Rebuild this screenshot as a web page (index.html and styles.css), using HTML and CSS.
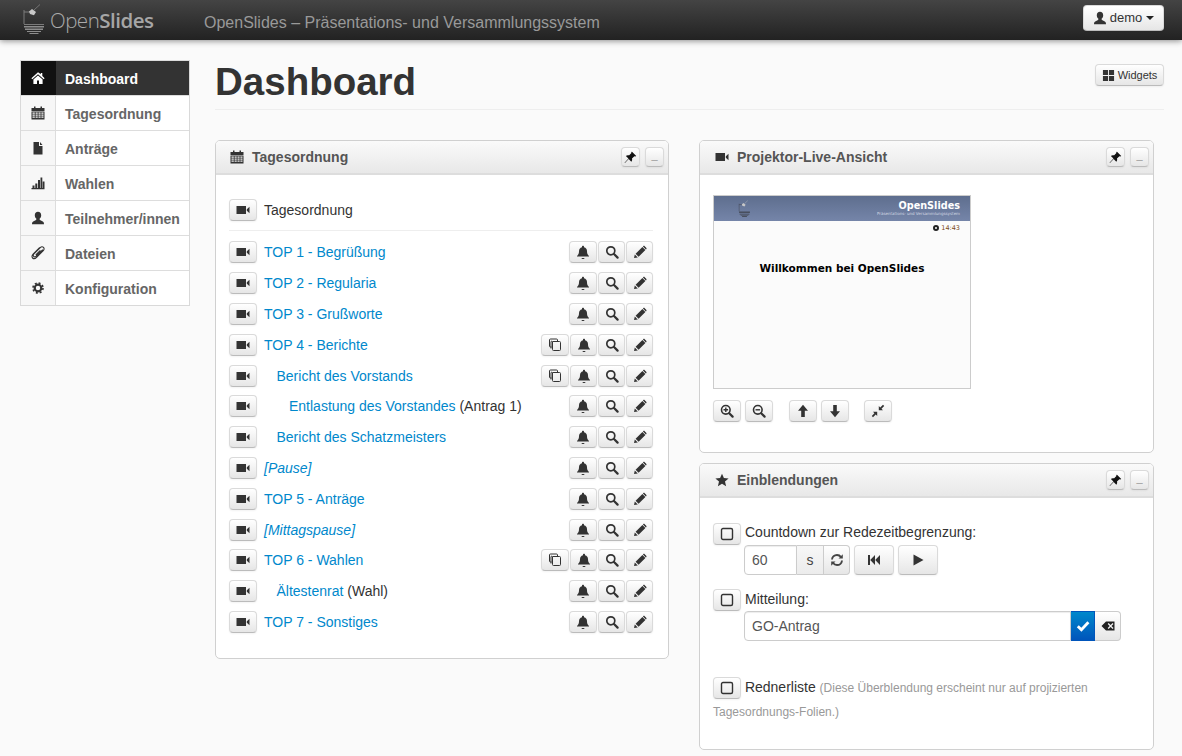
FILE: index.html
```html
<!DOCTYPE html>
<html lang="de">
<head>
  <meta charset="UTF-8" />
  <title>OpenSlides - Dashboard</title>
  <link rel="stylesheet" href="styles.css">
</head>
<body>
  <svg class="sprite" xmlns="http://www.w3.org/2000/svg">
    <symbol id="i-home" viewBox="0 0 14 14"><path d="M7 1.2 .4 7.200l.9 1L7 3.200l5.700 5 .9-1-2.300-2.100V2H9.800v1.300zM2.400 8.600V13H6V9.500h2V13h3.600V8.600L7 4.600z"/></symbol>
    <symbol id="i-calendar" viewBox="0 0 14 14"><path d="M3 .5h1.500V2h5V.5H11V2h2.500v3H.5V2H3z"/><path fill-rule="evenodd" d="M.5 5.500h13V13.500H.5zM1.500 6.500v1.200h2.300V6.500zm3.100 0v1.200h2.100V6.500zm2.900 0v1.200h2.100V6.500zm2.900 0v1.200h2.100V6.500zM1.500 8.500v1.200h2.300V8.500zm3.100 0v1.200h2.100V8.500zm2.900 0v1.200h2.100V8.500zm2.900 0v1.200h2.100V8.500zM1.500 10.500v1.200h2.300v-1.200zm3.100 0v1.200h2.100v-1.200zm2.900 0v1.200h2.100v-1.200zm2.900 0v1.200h2.100v-1.200z"/></symbol>
    <symbol id="i-file" viewBox="0 0 14 14"><path d="M2.500 1H8v4h3.500v8.500h-9zM9 1l2.500 3H9z"/></symbol>
    <symbol id="i-stats" viewBox="0 0 14 14"><path d="M.5 12h13v1.200H.5zM1.500 9.500h2V12h-2zM4.300 7.500h2V12h-2zM7 4h2v8H7zM9.500 1.500h1.800V12H9.500zM11.700 5.500h1.800V12h-1.800z"/></symbol>
    <symbol id="i-user" viewBox="0 0 14 14"><path d="M7 .8c2 0 3.200 1.500 3.200 3.400 0 1.300-.6 2.700-1.400 3.400-.3.300-.3 1.100.2 1.400l2.800 1.400c.9.500 1.200 1.200 1.200 2.800H1c0-1.600.3-2.300 1.200-2.800L5 9c.5-.3.500-1.100.2-1.400C4.400 6.900 3.800 5.500 3.800 4.200 3.800 2.300 5 .8 7 .8z"/></symbol>
    <symbol id="i-clip" viewBox="0 0 14 14"><path fill="none" stroke="currentColor" stroke-width="1.100" d="M11.800 3.600 5 10.400c-.7.700-1.900.7-2.300 0-.7-.7-.6-1.500 0-2.200l6.600-6.600c1-1 2.400-1 3.200-.2.800.8.800 2.200-.2 3.200L5.600 11.300c-1.400 1.400-3 1.700-4 .7-1-1-.7-2.600.7-4L8.800 1.500M9.400 4.400 4.800 9"/></symbol>
    <symbol id="i-cog" viewBox="0 0 14 14"><circle cx="7" cy="7" r="3.300" fill="none" stroke="currentColor" stroke-width="2.200"/><circle cx="7" cy="7" r="5" fill="none" stroke="currentColor" stroke-width="1.600" stroke-dasharray="2 1.930"/></symbol>
    <symbol id="i-video" viewBox="0 0 14 14"><path d="M.5 3h9.500v8H.5zM10.800 6.200 13.500 3.800v6.400L10.800 7.800z"/></symbol>
    <symbol id="i-bell" viewBox="0 0 14 14"><path d="M7 .8c.6 0 1 .4 1 1v.5c2 .5 3 2 3 4 0 2.500.6 3.500 2 4.700v.5H1V11c1.400-1.200 2-2.200 2-4.700 0-2 1-3.500 3-4V1.800c0-.6.400-1 1-1zM5.500 13h3c0 .6-.7 1-1.500 1s-1.500-.4-1.500-1z"/></symbol>
    <symbol id="i-search" viewBox="0 0 14 14"><circle cx="5.800" cy="5.800" r="4" fill="none" stroke="currentColor" stroke-width="1.700"/><path fill="none" stroke="currentColor" stroke-width="2.200" stroke-linecap="round" d="m9 9 3.600 3.600"/></symbol>
    <symbol id="i-pencil" viewBox="0 0 14 14"><path d="M1 13l.8-3.400 3 3zM2.600 8.800 9.400 2l3 3-6.800 6.800zM10.200 1.200c.5-.5 1-.5 1.500 0l1.500 1.500c.5.500.5 1 0 1.500l-.3.300-3-3z"/></symbol>
    <symbol id="i-copy" viewBox="0 0 14 14"><path fill="none" stroke="currentColor" stroke-width="1" d="M9.500 3V2a1 1 0 0 0-1-1h-6a1 1 0 0 0-1 1v6a1 1 0 0 0 1 1h1M4.500 3.500h7a1 1 0 0 1 1 1v7a1 1 0 0 1-1 1h-6a1 1 0 0 1-1-1z"/><path fill="none" stroke="currentColor" stroke-width="1" d="M3 10.500V4a1 1 0 0 1 1-1"/></symbol>
    <symbol id="i-pin" viewBox="0 0 14 14"><path d="M8.600.8 13.200 5.400l-1 .6-1-.3-2.600 2.400c.4 1.400.1 2.600-.7 3.400L5 8.600 1 13l-.4-.4L4.800 8 2 5.400c.9-.9 2.200-1.100 3.600-.7l2.400-2.600-.2-.9z"/></symbol>
    <symbol id="i-star" viewBox="0 0 14 14"><path d="m7 .8 1.900 4.300 4.700.4-3.600 3.100 1.100 4.600L7 10.800l-4.100 2.400L4 8.600.4 5.500l4.700-.4z"/></symbol>
    <symbol id="i-check" viewBox="0 0 14 14"><path fill="none" stroke="currentColor" stroke-width="2.800" d="m1.800 7.200 3.600 3.600 7-7.600"/></symbol>
    <symbol id="i-refresh" viewBox="0 0 14 14"><path fill="none" stroke="currentColor" stroke-width="1.900" d="M2 6.500C2.200 3.900 4.300 2 7 2c1.700 0 3 .7 3.900 2M12 7.500c-.2 2.600-2.300 4.500-5 4.500-1.700 0-3-.7-3.900-2"/><path d="M12.800 1.200v4.300H8.500zM1.200 12.800V8.500h4.300z"/></symbol>
    <symbol id="i-back" viewBox="0 0 14 14"><path d="M1 2h2v10H1zM8 2 3.200 7 8 12zM13 2 8.200 7l4.800 5z"/></symbol>
    <symbol id="i-play" viewBox="0 0 14 14"><path d="M2.500 1.500 12.500 7l-10 5.500z"/></symbol>
    <symbol id="i-del" viewBox="0 0 14 14"><path fill-rule="evenodd" d="M5 2.500h8.500v9H5L.5 7zM6.700 5l2 2-2 2 .9.900 2-2 2 2 .9-.9-2-2 2-2-.9-.9-2 2-2-2z"/></symbol>
    <symbol id="i-zoomin" viewBox="0 0 14 14"><circle cx="5.800" cy="5.800" r="4.300" fill="none" stroke="currentColor" stroke-width="1.600"/><path fill="none" stroke="currentColor" stroke-width="2.200" stroke-linecap="round" d="m9.200 9.200 3.400 3.400"/><path fill="none" stroke="currentColor" stroke-width="1.400" d="M3.500 5.800h4.600M5.800 3.500v4.600"/></symbol>
    <symbol id="i-zoomout" viewBox="0 0 14 14"><circle cx="5.800" cy="5.800" r="4.300" fill="none" stroke="currentColor" stroke-width="1.600"/><path fill="none" stroke="currentColor" stroke-width="2.200" stroke-linecap="round" d="m9.200 9.200 3.400 3.400"/><path fill="none" stroke="currentColor" stroke-width="1.400" d="M3.500 5.800h4.600"/></symbol>
    <symbol id="i-up" viewBox="0 0 14 14"><path d="M7 .8 12 6.800H8.800V13H5.200V6.800H2z"/></symbol>
    <symbol id="i-down" viewBox="0 0 14 14"><path d="M7 13.200 2 7.200h3.200V1h3.600v6.200H12z"/></symbol>
    <symbol id="i-small" viewBox="0 0 14 14"><path d="M7.800 6.200 7.800 2l1.400 1.400L12 .8l1.200 1.200-2.700 2.700 1.500 1.500zM6.200 7.800H2l1.400 1.400L.8 12l1.200 1.200 2.700-2.700 1.500 1.500z"/></symbol>
    <symbol id="i-grid" viewBox="0 0 14 14"><path d="M1 1h5.500v5.500H1zM7.500 1H13v5.500H7.500zM1 7.500h5.500V13H1zM7.500 7.500H13V13H7.500z"/></symbol>
    <symbol id="i-box" viewBox="0 0 14 14"><rect x="1.500" y="1.500" width="11" height="11" rx="1.500" fill="none" stroke="currentColor" stroke-width="1.400"/></symbol>
    <symbol id="i-logo" viewBox="0 0 24 30"><path d="M1.500 6h1v14h-1zM2 7.500h6v1H2zM2 20h20v1H2z" opacity=".8"/><path d="M2 22h20v1.500H2zM3 24.500h18V26H3zM5 27h14v1H5zM7.500 29h9v1h-9z"/><path d="M7 7.500 10 5l4 3-2 3.200-4-1.200z" class="logo-lamp"/><path fill="none" stroke="currentColor" stroke-width=".7" d="M12 6 18 .5"/></symbol>
  </svg>

  <header class="navbar">
    <a class="brand" href="#">
      <svg class="brand-logo"><use href="#i-logo"/></svg>
      <span>Open<b>Slides</b></span>
    </a>
    <span class="tagline">OpenSlides – Präsentations- und Versammlungssystem</span>
    <button class="btn user-btn"><svg class="ico"><use href="#i-user"/></svg> demo <i class="caret"></i></button>
  </header>

  <div class="page">
    <nav class="sidebar">
      <a class="nav-item active" href="#"><span class="nav-ico"><svg class="ico"><use href="#i-home"/></svg></span><span class="nav-label">Dashboard</span></a>
      <a class="nav-item" href="#"><span class="nav-ico"><svg class="ico"><use href="#i-calendar"/></svg></span><span class="nav-label">Tagesordnung</span></a>
      <a class="nav-item" href="#"><span class="nav-ico"><svg class="ico"><use href="#i-file"/></svg></span><span class="nav-label">Anträge</span></a>
      <a class="nav-item" href="#"><span class="nav-ico"><svg class="ico"><use href="#i-stats"/></svg></span><span class="nav-label">Wahlen</span></a>
      <a class="nav-item" href="#"><span class="nav-ico"><svg class="ico"><use href="#i-user"/></svg></span><span class="nav-label">Teilnehmer/innen</span></a>
      <a class="nav-item" href="#"><span class="nav-ico"><svg class="ico"><use href="#i-clip"/></svg></span><span class="nav-label">Dateien</span></a>
      <a class="nav-item" href="#"><span class="nav-ico"><svg class="ico"><use href="#i-cog"/></svg></span><span class="nav-label">Konfiguration</span></a>
    </nav>

    <main class="content">
      <div class="page-head">
        <h1>Dashboard</h1>
        <button class="btn widgets-btn"><svg class="ico"><use href="#i-grid"/></svg> Widgets</button>
      </div>

      <div class="columns">
        <section class="panel">
          <div class="panel-head">
            <svg class="ico"><use href="#i-calendar"/></svg>
            <h3>Tagesordnung</h3>
            <button class="btn btn-mini"><svg class="ico"><use href="#i-pin"/></svg></button>
            <button class="btn btn-mini muted">_</button>
          </div>
          <div class="panel-body agenda">
            <div class="agenda-title">
              <button class="btn btn-row"><svg class="ico"><use href="#i-video"/></svg></button>
              <span>Tagesordnung</span>
            </div>
            <div class="agenda-row">
              <button class="btn btn-row"><svg class="ico"><use href="#i-video"/></svg></button>
              <span class="agenda-text"><a href="#">TOP 1 - Begrüßung</a></span>
              <button class="btn btn-row"><svg class="ico"><use href="#i-bell"/></svg></button><button class="btn btn-row"><svg class="ico"><use href="#i-search"/></svg></button><button class="btn btn-row"><svg class="ico"><use href="#i-pencil"/></svg></button>
            </div>
            <div class="agenda-row">
              <button class="btn btn-row"><svg class="ico"><use href="#i-video"/></svg></button>
              <span class="agenda-text"><a href="#">TOP 2 - Regularia</a></span>
              <button class="btn btn-row"><svg class="ico"><use href="#i-bell"/></svg></button><button class="btn btn-row"><svg class="ico"><use href="#i-search"/></svg></button><button class="btn btn-row"><svg class="ico"><use href="#i-pencil"/></svg></button>
            </div>
            <div class="agenda-row">
              <button class="btn btn-row"><svg class="ico"><use href="#i-video"/></svg></button>
              <span class="agenda-text"><a href="#">TOP 3 - Grußworte</a></span>
              <button class="btn btn-row"><svg class="ico"><use href="#i-bell"/></svg></button><button class="btn btn-row"><svg class="ico"><use href="#i-search"/></svg></button><button class="btn btn-row"><svg class="ico"><use href="#i-pencil"/></svg></button>
            </div>
            <div class="agenda-row">
              <button class="btn btn-row"><svg class="ico"><use href="#i-video"/></svg></button>
              <span class="agenda-text"><a href="#">TOP 4 - Berichte</a></span>
              <button class="btn btn-row"><svg class="ico"><use href="#i-copy"/></svg></button><button class="btn btn-row"><svg class="ico"><use href="#i-bell"/></svg></button><button class="btn btn-row"><svg class="ico"><use href="#i-search"/></svg></button><button class="btn btn-row"><svg class="ico"><use href="#i-pencil"/></svg></button>
            </div>
            <div class="agenda-row">
              <button class="btn btn-row"><svg class="ico"><use href="#i-video"/></svg></button>
              <span class="agenda-text level-1"><a href="#">Bericht des Vorstands</a></span>
              <button class="btn btn-row"><svg class="ico"><use href="#i-copy"/></svg></button><button class="btn btn-row"><svg class="ico"><use href="#i-bell"/></svg></button><button class="btn btn-row"><svg class="ico"><use href="#i-search"/></svg></button><button class="btn btn-row"><svg class="ico"><use href="#i-pencil"/></svg></button>
            </div>
            <div class="agenda-row">
              <button class="btn btn-row"><svg class="ico"><use href="#i-video"/></svg></button>
              <span class="agenda-text level-2"><a href="#">Entlastung des Vorstandes</a> (Antrag 1)</span>
              <button class="btn btn-row"><svg class="ico"><use href="#i-bell"/></svg></button><button class="btn btn-row"><svg class="ico"><use href="#i-search"/></svg></button><button class="btn btn-row"><svg class="ico"><use href="#i-pencil"/></svg></button>
            </div>
            <div class="agenda-row">
              <button class="btn btn-row"><svg class="ico"><use href="#i-video"/></svg></button>
              <span class="agenda-text level-1"><a href="#">Bericht des Schatzmeisters</a></span>
              <button class="btn btn-row"><svg class="ico"><use href="#i-bell"/></svg></button><button class="btn btn-row"><svg class="ico"><use href="#i-search"/></svg></button><button class="btn btn-row"><svg class="ico"><use href="#i-pencil"/></svg></button>
            </div>
            <div class="agenda-row">
              <button class="btn btn-row"><svg class="ico"><use href="#i-video"/></svg></button>
              <span class="agenda-text"><a class="pause" href="#">[Pause]</a></span>
              <button class="btn btn-row"><svg class="ico"><use href="#i-bell"/></svg></button><button class="btn btn-row"><svg class="ico"><use href="#i-search"/></svg></button><button class="btn btn-row"><svg class="ico"><use href="#i-pencil"/></svg></button>
            </div>
            <div class="agenda-row">
              <button class="btn btn-row"><svg class="ico"><use href="#i-video"/></svg></button>
              <span class="agenda-text"><a href="#">TOP 5 - Anträge</a></span>
              <button class="btn btn-row"><svg class="ico"><use href="#i-bell"/></svg></button><button class="btn btn-row"><svg class="ico"><use href="#i-search"/></svg></button><button class="btn btn-row"><svg class="ico"><use href="#i-pencil"/></svg></button>
            </div>
            <div class="agenda-row">
              <button class="btn btn-row"><svg class="ico"><use href="#i-video"/></svg></button>
              <span class="agenda-text"><a class="pause" href="#">[Mittagspause]</a></span>
              <button class="btn btn-row"><svg class="ico"><use href="#i-bell"/></svg></button><button class="btn btn-row"><svg class="ico"><use href="#i-search"/></svg></button><button class="btn btn-row"><svg class="ico"><use href="#i-pencil"/></svg></button>
            </div>
            <div class="agenda-row">
              <button class="btn btn-row"><svg class="ico"><use href="#i-video"/></svg></button>
              <span class="agenda-text"><a href="#">TOP 6 - Wahlen</a></span>
              <button class="btn btn-row"><svg class="ico"><use href="#i-copy"/></svg></button><button class="btn btn-row"><svg class="ico"><use href="#i-bell"/></svg></button><button class="btn btn-row"><svg class="ico"><use href="#i-search"/></svg></button><button class="btn btn-row"><svg class="ico"><use href="#i-pencil"/></svg></button>
            </div>
            <div class="agenda-row">
              <button class="btn btn-row"><svg class="ico"><use href="#i-video"/></svg></button>
              <span class="agenda-text level-1"><a href="#">Ältestenrat</a> (Wahl)</span>
              <button class="btn btn-row"><svg class="ico"><use href="#i-bell"/></svg></button><button class="btn btn-row"><svg class="ico"><use href="#i-search"/></svg></button><button class="btn btn-row"><svg class="ico"><use href="#i-pencil"/></svg></button>
            </div>
            <div class="agenda-row">
              <button class="btn btn-row"><svg class="ico"><use href="#i-video"/></svg></button>
              <span class="agenda-text"><a href="#">TOP 7 - Sonstiges</a></span>
              <button class="btn btn-row"><svg class="ico"><use href="#i-bell"/></svg></button><button class="btn btn-row"><svg class="ico"><use href="#i-search"/></svg></button><button class="btn btn-row"><svg class="ico"><use href="#i-pencil"/></svg></button>
            </div>
          </div>
        </section>

        <div class="right-col">
          <section class="panel">
            <div class="panel-head">
              <svg class="ico"><use href="#i-video"/></svg>
              <h3>Projektor-Live-Ansicht</h3>
              <button class="btn btn-mini"><svg class="ico"><use href="#i-pin"/></svg></button>
              <button class="btn btn-mini muted">_</button>
            </div>
            <div class="panel-body projector">
              <div class="slide">
                <div class="slide-band">
                  <svg class="slide-logo"><use href="#i-logo"/></svg>
                  <div class="slide-brand"><strong>OpenSlides</strong><small>Präsentations- und Versammlungssystem</small></div>
                </div>
                <div class="slide-clock"><span class="clock-dot"></span> 14:43</div>
                <div class="slide-title">Willkommen bei OpenSlides</div>
              </div>
              <div class="projector-tools">
                <button class="btn btn-row"><svg class="ico"><use href="#i-zoomin"/></svg></button>
                <button class="btn btn-row"><svg class="ico"><use href="#i-zoomout"/></svg></button>
                <button class="btn btn-row tool-sep"><svg class="ico"><use href="#i-up"/></svg></button>
                <button class="btn btn-row"><svg class="ico"><use href="#i-down"/></svg></button>
                <button class="btn btn-row tool-sep2"><svg class="ico"><use href="#i-small"/></svg></button>
              </div>
            </div>
          </section>

          <section class="panel">
            <div class="panel-head">
              <svg class="ico"><use href="#i-star"/></svg>
              <h3>Einblendungen</h3>
              <button class="btn btn-mini"><svg class="ico"><use href="#i-pin"/></svg></button>
              <button class="btn btn-mini muted">_</button>
            </div>
            <div class="panel-body overlays">
              <div class="overlay">
                <button class="btn btn-row"><svg class="ico"><use href="#i-box"/></svg></button>
                <div class="overlay-main">
                  <label>Countdown zur Redezeitbegrenzung:</label>
                  <div class="controls">
                    <div class="input-group">
                      <input class="field field-short" type="text" value="60">
                      <span class="addon">s</span>
                      <span class="addon addon-end"><svg class="ico"><use href="#i-refresh"/></svg></span>
                    </div>
                    <button class="btn btn-tall"><svg class="ico"><use href="#i-back"/></svg></button>
                    <button class="btn btn-tall"><svg class="ico"><use href="#i-play"/></svg></button>
                  </div>
                </div>
              </div>
              <div class="overlay">
                <button class="btn btn-row"><svg class="ico"><use href="#i-box"/></svg></button>
                <div class="overlay-main">
                  <label>Mitteilung:</label>
                  <div class="controls">
                    <div class="input-group wide">
                      <input class="field field-long" type="text" value="GO-Antrag">
                      <span class="addon addon-ok"><svg class="ico"><use href="#i-check"/></svg></span>
                      <span class="addon addon-end addon-del"><svg class="ico"><use href="#i-del"/></svg></span>
                    </div>
                  </div>
                </div>
              </div>
              <p class="speakers">
                <button class="btn btn-row"><svg class="ico"><use href="#i-box"/></svg></button>
                Rednerliste <small>(Diese Überblendung erscheint nur auf projizierten</small> <small>Tagesordnungs-Folien.)</small>
              </p>
            </div>
          </section>
        </div>
      </div>
    </main>
  </div>
</body>
</html>
```

FILE: styles.css
```css
* {
  box-sizing: border-box;
}
body {
  margin: 0;
  background: #fafafa;
  color: #333;
  font-family: "Liberation Sans", Arial, sans-serif;
  font-size: 14px;
  line-height: 20px;
  overflow: hidden;
}
a {
  color: #0088cc;
  text-decoration: none;
}
.sprite {
  display: none;
}
.ico {
  width: 14px;
  height: 14px;
  fill: currentColor;
  flex: none;
  display: block;
}

/* buttons */
.btn {
  display: inline-flex;
  align-items: center;
  justify-content: center;
  padding: 0;
  font: inherit;
  color: #333;
  background: linear-gradient(#ffffff, #e6e6e6);
  border: 1px solid #dadada;
  border-bottom-color: #bbbbbb;
  border-radius: 4px;
  box-shadow: inset 0 1px 0 rgba(255,255,255,0.2), 0 1px 2px rgba(0,0,0,0.05);
}
.btn-row {
  width: 28px;
  height: 22px;
  flex: none;
}
.btn-mini {
  width: 19px;
  height: 20px;
  flex: none;
  margin-left: 5px;
}
.btn-mini .ico {
  width: 13px;
  height: 13px;
  color: #111;
}
.btn-mini.muted {
  color: #999;
  font-size: 11px;
  line-height: 14px;
  align-items: flex-start;
}
.btn-tall {
  width: 40px;
  height: 30px;
}

/* navbar */
.navbar {
  height: 40px;
  display: flex;
  align-items: center;
  padding: 0 18px 0 22px;
  background: linear-gradient(#444444, #222222);
  box-shadow: 0 1px 6px rgba(0,0,0,0.45);
}
.brand {
  display: flex;
  align-items: center;
  gap: 4px;
  width: 182px;
  color: #aaa;
  font-family: "Open Sans", sans-serif;
  font-size: 20.5px;
  font-weight: 300;
  letter-spacing: -0.5px;
}
.brand b {
  font-weight: 600;
  color: #a6a6a6;
}
.brand-logo {
  width: 24px;
  height: 30px;
  fill: #8d8d8d;
  color: #8d8d8d;
  margin-bottom: 2px;
}
.logo-lamp {
  fill: #c8c8c8;
}
.tagline {
  color: #999;
  font-size: 16px;
  padding-top: 5px;
  flex: 1;
}
.user-btn {
  width: 81px;
  height: 26px;
  margin-bottom: 4px;
  gap: 3px;
  font-size: 13px;
}
.caret {
  width: 0;
  height: 0;
  margin-left: 1px;
  border-left: 4px solid transparent;
  border-right: 4px solid transparent;
  border-top: 4px solid #222;
}

/* layout */
.page {
  display: flex;
  gap: 25px;
  padding: 20px 18px 0 20px;
}
.sidebar {
  width: 170px;
  flex: none;
  align-self: flex-start;
  background: #fff;
  border: 1px solid #d9d9d9;
  border-top: 0;
}
.nav-item {
  display: flex;
  height: 35px;
  border-top: 1px solid #dddddd;
  color: #666;
  font-weight: bold;
}
.nav-ico {
  width: 35px;
  display: flex;
  align-items: center;
  justify-content: center;
  background: #f7f7f7;
  border-right: 1px solid #dddddd;
  color: #333;
  flex: none;
}
.nav-label {
  padding: 1px 0 0 9px;
  line-height: 35px;
}
.nav-item.active {
  background: #333;
  color: #fff;
}
.nav-item.active .nav-ico {
  background: #111;
  border-right-color: #111;
  color: #fff;
}
.content {
  flex: 1;
}
.page-head {
  display: flex;
  justify-content: space-between;
  height: 50px;
  border-bottom: 1px solid #eeeeee;
}
h1 {
  margin: 0;
  color: #333;
  font-size: 38.5px;
  line-height: 44px;
}
.widgets-btn {
  width: 69px;
  height: 22px;
  margin-top: 4px;
  gap: 3px;
  font-size: 11px;
}
.widgets-btn .ico {
  width: 13px;
  height: 13px;
}
.columns {
  display: grid;
  grid-template-columns: 454px 455px;
  gap: 30px;
  margin-top: 30px;
  align-items: start;
}
.right-col {
  display: flex;
  flex-direction: column;
  gap: 10px;
}

/* panels */
.panel {
  background: #fff;
  border: 1px solid #d0d0d0;
  border-radius: 5px;
}
.panel-head {
  height: 34px;
  display: flex;
  align-items: center;
  padding: 0 4px 0 14px;
  background: linear-gradient(#fafafa, #e8e8e8);
  border-bottom: 2px solid #dddddd;
  border-radius: 4px 4px 0 0;
  color: #333;
}
.right-col .panel-head {
  padding-left: 15px;
}
.panel-head h3 {
  flex: 1;
  margin: 0 0 0 8px;
  color: #555;
  font-size: 14px;
  line-height: 20px;
}
.panel-body {
  padding: 20px 15px 21px 13px;
}

/* agenda */
.agenda-title {
  display: flex;
  align-items: center;
  gap: 7px;
  height: 36px;
  padding-bottom: 6px;
  border-bottom: 1px solid #eeeeee;
  margin-bottom: 6px;
}
.agenda-row {
  display: flex;
  align-items: center;
  height: 30.8px;
}
.agenda-row .btn + .btn {
  width: 27px;
  margin-left: 1px;
}
.agenda-text {
  flex: 1;
  padding-left: 7px;
}
.level-1 {
  padding-left: 19.5px;
}
.level-2 {
  padding-left: 32px;
}
.pause {
  font-style: italic;
}

/* projector */
.projector {
  padding-bottom: 30px;
}
.slide {
  width: 258px;
  height: 194px;
  background: #fbfbfb;
  border: 1px solid #cccccc;
}
.slide-band {
  height: 25px;
  display: flex;
  align-items: center;
  justify-content: space-between;
  padding: 0 10px 0 24px;
  background: linear-gradient(#5e6e8e, #7585a9);
}
.slide-logo {
  width: 13px;
  height: 17px;
  fill: #3d4048;
  color: #c8c8c8;
}
.slide-brand {
  display: flex;
  flex-direction: column;
  align-items: flex-end;
  color: #fff;
  font-family: "DejaVu Sans", sans-serif;
}
.slide-brand strong {
  font-size: 9.7px;
  line-height: 11px;
}
.slide-brand small {
  font-size: 4px;
  line-height: 6px;
  color: #d5d9e3;
}
.slide-clock {
  display: flex;
  align-items: center;
  justify-content: flex-end;
  gap: 2px;
  padding: 1px 10px 0 0;
  color: #7a4a20;
  font-family: "DejaVu Sans", sans-serif;
  font-size: 6.5px;
  line-height: 12px;
}
.clock-dot {
  width: 6px;
  height: 6px;
  border: 2px solid #222;
  border-radius: 50%;
}
.slide-title {
  margin-top: 26px;
  text-align: center;
  color: #000;
  font-family: "DejaVu Sans", sans-serif;
  font-size: 10.5px;
  font-weight: bold;
  line-height: 16px;
}
.projector-tools {
  display: flex;
  gap: 4px;
  margin-top: 11px;
}
.tool-sep {
  margin-left: 12px;
}
.tool-sep2 {
  margin-left: 11px;
}

/* overlays */
.overlays {
  padding-top: 25px;
  padding-bottom: 25px;
}
.overlay {
  display: flex;
  gap: 3px;
  margin-bottom: 14px;
}
.overlay-main {
  flex: 1;
}
.overlay-main label {
  display: block;
  margin-left: 1px;
  line-height: 18px;
  margin-bottom: 4px;
}
.overlay + .overlay label {
  margin-bottom: 3px;
  padding-top: 1px;
}
.controls {
  display: flex;
  gap: 4px;
}
.input-group {
  display: flex;
  height: 30px;
}
.field {
  height: 30px;
  padding: 0 7px;
  border: 1px solid #cccccc;
  border-radius: 4px 0 0 4px;
  box-shadow: inset 0 1px 1px rgba(0,0,0,0.075);
  color: #555;
  font: inherit;
}
.field-short {
  width: 53px;
}
.field-long {
  width: 327px;
}
.addon {
  display: flex;
  align-items: center;
  justify-content: center;
  width: 27px;
  background: linear-gradient(#f7f7f7, #ececec);
  border: 1px solid #cccccc;
  border-left: 0;
  color: #444;
}
.addon-end {
  width: 26px;
  background: linear-gradient(#ffffff, #e6e6e6);
  border-radius: 0 4px 4px 0;
}
.addon-ok {
  width: 24px;
  background: linear-gradient(#0088cc, #0055bb);
  border-color: #0055bb;
  color: #fff;
}
.addon-del .ico {
  color: #222;
}
.speakers {
  margin: 35px 0 0;
  line-height: 23px;
}
.speakers .btn {
  vertical-align: middle;
}
.speakers small {
  color: #999;
  font-size: 12px;
}
```
